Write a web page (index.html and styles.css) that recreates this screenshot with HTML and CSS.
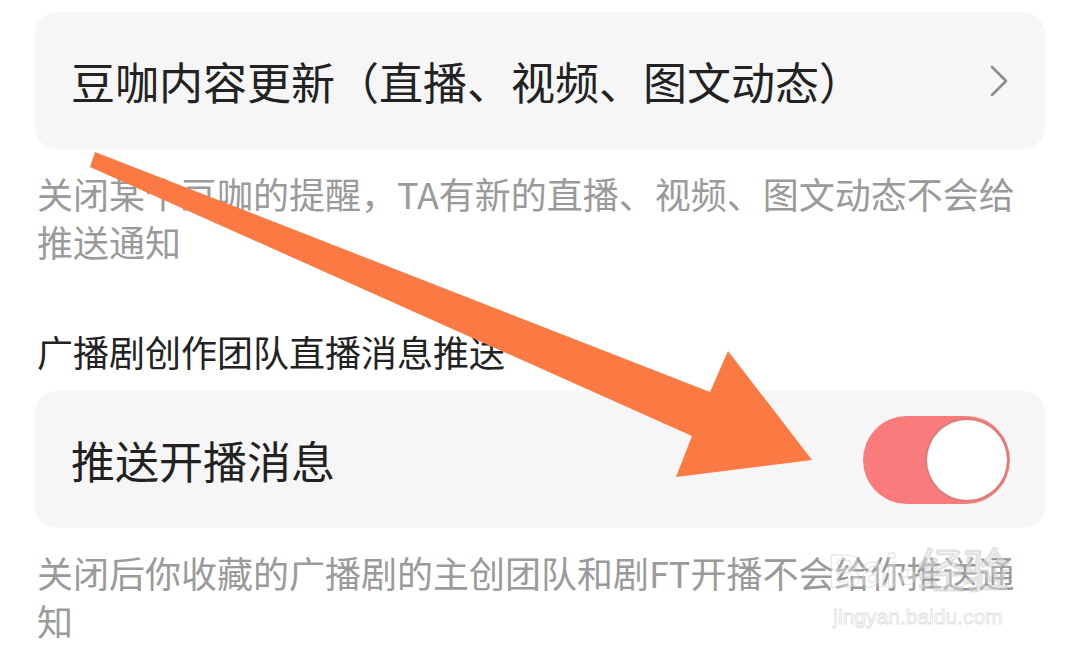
FILE: index.html
```html
<!DOCTYPE html>
<html lang="zh-CN">

<head>
    <meta charset="UTF-8">
    <meta name="viewport" content="width=device-width, initial-scale=1.0">
    <title>推送设置</title>
    <link rel="stylesheet" href="styles.css">
</head>

<body>
    <div class="page">
        <div class="card">
            <span class="card-title">豆咖内容更新（直播、视频、图文动态）</span>
            <svg class="chevron" width="20" height="34" viewBox="0 0 20 34">
                <path d="M3 3 L17 17 L3 31" fill="none" stroke="#8c8c8c" stroke-width="2.6" stroke-linecap="round" stroke-linejoin="round"/>
            </svg>
        </div>
        <p class="desc desc-first">关闭某个豆咖的提醒，TA有新的直播、视频、图文动态不会给推送通知</p>

        <h2 class="label">广播剧创作团队直播消息推送</h2>
        <div class="card">
            <span class="card-title">推送开播消息</span>
            <div class="switch on"><span class="knob"></span></div>
        </div>
        <p class="desc">关闭后你收藏的广播剧的主创团队和剧FT开播不会给你推送通知</p>
    </div>

    <!-- 标注箭头 -->
    <svg class="arrow" width="1080" height="655" viewBox="0 0 1080 655">
        <polygon points="95,152 710,392 728,351 812,460 676,477 692,436 90,167" fill="#fb7a43"/>
    </svg>

    <div class="watermark">
        <div class="wm-logo">Bai<span class="paw">◕</span>经验</div>
        <div class="wm-url">jingyan.baidu.com</div>
    </div>
</body>

</html>
```

FILE: styles.css
```css
body {
    margin: 0;
    background-color: #fff;
    font-family: "Noto Sans CJK SC", "Noto Sans", sans-serif;
    overflow: hidden;
}

.page {
    padding: 12px 35px 0 35px;
}

.card {
    display: flex;
    align-items: center;
    justify-content: space-between;
    height: 137px;
    padding: 0 36px 0 36px;
    background-color: #f6f6f6;
    border-radius: 22px;
    box-sizing: border-box;
}

.card-title {
    font-size: 44px;
    color: #222;
    line-height: 1;
}

.desc {
    margin: 20px 0 0 2px;
    font-size: 36px;
    line-height: 48px;
    color: #9a9a9a;
}

.label {
    margin: 62px 0 16px 2px;
    font-size: 36px;
    line-height: 48px;
    font-weight: normal;
    color: #222;
}

.switch {
    width: 147px;
    height: 88px;
    border-radius: 44px;
    background-color: #f97b7b;
    display: flex;
    align-items: center;
    justify-content: flex-end;
    padding: 0 3px;
    box-sizing: border-box;
    margin-right: -1px;
}

.knob {
    width: 80px;
    height: 80px;
    border-radius: 50%;
    background-color: #fff;
    box-shadow: 0 0 0 2px #d97c7c;
}

.arrow {
    position: absolute;
    left: 0;
    top: 0;
    pointer-events: none;
}

.watermark {
    position: absolute;
    left: 820px;
    top: 542px;
    width: 196px;
    text-align: center;
    color: rgba(255, 255, 255, 0.35);
    -webkit-text-stroke: 1px rgba(190, 190, 190, 0.45);
    font-family: "Liberation Sans", sans-serif;
    pointer-events: none;
}

.wm-logo {
    font-size: 46px;
    font-weight: bold;
    line-height: 58px;
    letter-spacing: -1px;
}

.paw {
    font-size: 36px;
}

.wm-url {
    font-size: 21px;
    line-height: 26px;
}
```
